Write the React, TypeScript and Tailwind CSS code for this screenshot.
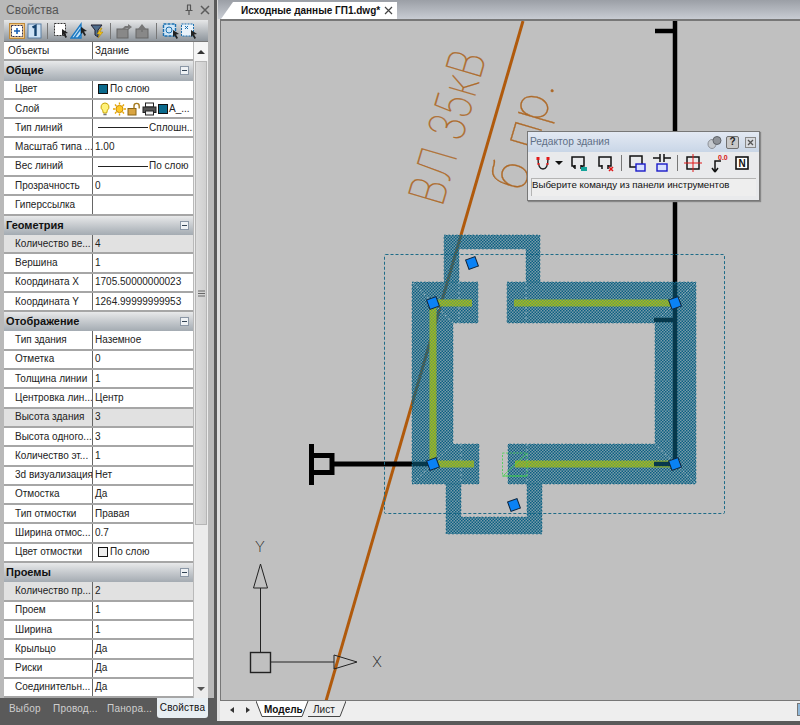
import React from "react";

type Row = {
  k?: string;
  v?: React.ReactNode;
  h?: string;
  sel?: boolean;
  top?: boolean;
};

const Line = ({ label }: { label: string }) => (
  <span className="flex items-center">
    <span className="w-[50px] h-px bg-[#222] ml-[3px] mr-[1px]" />
    <span>{label}</span>
  </span>
);

const Swatch = ({ c }: { c: string }) => (
  <span className="inline-block w-[10px] h-[10px] border border-[#111] mr-[2px] ml-[4px]" style={{ background: c }} />
);

const LayerIcons = () => (
  <span className="flex items-center ml-[3px]">
    <svg width="14" height="14" viewBox="0 0 14 14">
      <path d="M7 1a4 4 0 0 0-2.4 7.2L5.3 11h3.4l.7-2.8A4 4 0 0 0 7 1z" fill="#fff27a" stroke="#c9a400" />
      <path d="M5.4 12.5h3.2" stroke="#777" strokeWidth="1.5" />
    </svg>
    <svg width="15" height="14" viewBox="0 0 15 14">
      <circle cx="7.5" cy="7" r="3.6" fill="#ffc928" stroke="#c98a00" />
      <path d="M7.5 .5v2M7.5 11.5v2M1 7h2M12 7h2M3 2.5l1.4 1.4M10.6 10.1L12 11.5M3 11.5l1.4-1.4M10.6 3.9L12 2.5" stroke="#e6a500" strokeWidth="1.4" />
    </svg>
    <svg width="15" height="14" viewBox="0 0 15 14">
      <rect x="1" y="6.5" width="8" height="6.5" fill="#d9a441" stroke="#8a6414" />
      <path d="M7 6.5V4a2.6 2.6 0 0 1 5.2 0v2.5" fill="none" stroke="#a77c20" strokeWidth="1.4" />
    </svg>
    <svg width="15" height="14" viewBox="0 0 15 14">
      <rect x="3.5" y="1" width="8" height="4" fill="#fff" stroke="#222" />
      <rect x="1" y="5" width="13" height="5.5" fill="#555" stroke="#222" />
      <rect x="3.5" y="9" width="8" height="4" fill="#eee" stroke="#222" />
    </svg>
    <span className="inline-block w-[10px] h-[10px] border border-[#111] mr-[1px] ml-[1px] bg-[#0b6a8c]" />
    <span>A_...</span>
  </span>
);

const rows: Row[] = [
  { k: "Объекты", v: "Здание", top: true },
  { h: "Общие" },
  { k: "Цвет", v: <span className="flex items-center -ml-[1px]"><Swatch c="#0b6a8c" />По слою</span> },
  { k: "Слой", v: <LayerIcons /> },
  { k: "Тип линий", v: <Line label="Сплошн..." /> },
  { k: "Масштаб типа ...", v: "1.00" },
  { k: "Вес линий", v: <Line label="По слою" /> },
  { k: "Прозрачность", v: "0" },
  { k: "Гиперссылка", v: "" },
  { h: "Геометрия" },
  { k: "Количество ве...", v: "4", sel: true },
  { k: "Вершина", v: "1" },
  { k: "Координата X", v: "1705.50000000023" },
  { k: "Координата Y", v: "1264.99999999953" },
  { h: "Отображение" },
  { k: "Тип здания", v: "Наземное" },
  { k: "Отметка", v: "0" },
  { k: "Толщина линии", v: "1" },
  { k: "Центровка лин...", v: "Центр" },
  { k: "Высота здания", v: "3", sel: true },
  { k: "Высота одного...", v: "3" },
  { k: "Количество эт...", v: "1" },
  { k: "3d визуализация", v: "Нет" },
  { k: "Отмостка", v: "Да" },
  { k: "Тип отмостки", v: "Правая" },
  { k: "Ширина отмос...", v: "0.7" },
  { k: "Цвет отмостки", v: <span className="flex items-center -ml-[1px]"><Swatch c="#eeeeee" />По слою</span> },
  { h: "Проемы" },
  { k: "Количество пр...", v: "2", sel: true },
  { k: "Проем", v: "1" },
  { k: "Ширина", v: "1" },
  { k: "Крыльцо", v: "Да" },
  { k: "Риски", v: "Да" },
  { k: "Соединительн...", v: "Да" },
];

const Sep = () => <span className="w-px h-[16px] bg-[#777] mx-[5px] shrink-0" />;

const PanelToolbar = () => (
  <div className="h-[22px] flex items-center pl-[5px] bg-gradient-to-b from-[#e6e7e8] to-[#8f969d] border-b border-[#777]">
    <span className="w-[16px] h-[16px] flex items-center justify-center bg-[#f2c987] border border-[#c08a3a]">
      <svg width="12" height="12" viewBox="0 0 12 12">
        <rect x=".5" y=".5" width="11" height="11" fill="#fff" stroke="#335" strokeDasharray="2 1" />
        <path d="M6 3v6M3 6h6" stroke="#1a5fb4" strokeWidth="1.6" />
      </svg>
    </span>
    <svg className="ml-[2px]" width="15" height="16" viewBox="0 0 15 16">
      <rect x="1" y="1" width="13" height="14" fill="#cfe3f5" stroke="#5b7fa3" />
      <path d="M5.5 4.5L8.5 3V13" fill="none" stroke="#14426e" strokeWidth="2.4" />
    </svg>
    <Sep />
    <svg width="17" height="17" viewBox="0 0 17 17">
      <rect x="1.5" y="1.5" width="11" height="12" fill="#fff" stroke="#333" strokeDasharray="2 1" />
      <path d="M9 7l6 4-3 .5 2 3.5-1.5 1-2-3.5L9 14z" fill="#222" />
    </svg>
    <svg className="ml-[0px]" width="19" height="18" viewBox="0 0 19 18">
      <path d="M1 16L11 2v14zM4 16l8-11M8 16l4-5" fill="#bfe0f7" stroke="#1a78c2" strokeWidth="1.3" />
      <path d="M11 5l6 4-3 .5 2 3.5-1.5 1-2-3.5L11 12z" fill="#222" />
    </svg>
    <svg className="ml-[1px]" width="15" height="16" viewBox="0 0 15 16">
      <path d="M1 2h11L8 7v7L5 12V7z" fill="#4f6d8c" stroke="#223" />
      <path d="M11 5L7 11h3l-2 4 5-6h-3l2-4z" fill="#f5c518" stroke="#a67c00" strokeWidth=".5" />
    </svg>
    <Sep />
    <svg width="17" height="16" viewBox="0 0 17 16">
      <rect x="1" y="6" width="11" height="9" fill="#888" stroke="#666" />
      <path d="M6 6l3-3h3V1l4 3-4 3V5h-2L8 7z" fill="#777" />
    </svg>
    <svg className="ml-[1px]" width="17" height="16" viewBox="0 0 17 16">
      <rect x="2" y="6" width="12" height="9" fill="#888" stroke="#666" />
      <path d="M8 1l4 5H9v3H7V6H4z" fill="#777" />
    </svg>
    <Sep />
    <svg width="19" height="18" viewBox="0 0 19 18">
      <rect x="1.5" y="2" width="12" height="12" fill="#cfe6f7" stroke="#1a6fb0" strokeWidth="1.4" strokeDasharray="3 1" />
      <circle cx="7" cy="8" r="3" fill="none" stroke="#1a6fb0" />
      <path d="M11 8l6 4-3 .5 2 3.5-1.5 1-2-3.5L11 15z" fill="#222" />
    </svg>
    <svg className="ml-[-1px]" width="19" height="18" viewBox="0 0 19 18">
      <rect x="1.5" y="2" width="12" height="12" fill="#e8f2fa" stroke="#1a6fb0" strokeDasharray="2 1" />
      <path d="M5 4l3 3M8 4L5 7" stroke="#1a6fb0" />
      <path d="M11 8l6 4-3 .5 2 3.5-1.5 1-2-3.5L11 15z" fill="#222" />
    </svg>
  </div>
);

const Grid = () => (
  <div className="flex-1 min-w-0 text-[10px]">
    {rows.map((r, i) =>
      r.h ? (
        <div
          key={i}
          className="h-[19.3px] flex items-center justify-between pl-[2px] pr-[4px] bg-gradient-to-b from-[#e8e9ea] to-[#a4abb2] text-[#111] font-bold text-[11px]"
        >
          <span>{r.h}</span>
          <span className="w-[9px] h-[9px] border border-[#8b97a6] bg-[#eef1f4] flex items-center justify-center">
            <span className="w-[5px] h-px bg-[#345]" />
          </span>
        </div>
      ) : (
        <div
          key={i}
          className={`h-[19.3px] flex border-b-2 border-[#a6a6a6] ${r.sel ? "bg-[#e1e1e1]" : "bg-white"}`}
        >
          <div className={`w-[89px] shrink-0 flex items-center border-r border-[#666] whitespace-nowrap overflow-hidden ${r.top ? "pl-[4px]" : "pl-[11px]"}`}>
            {r.k}
          </div>
          <div className="flex-1 flex items-center pl-[2px] whitespace-nowrap overflow-hidden">{r.v}</div>
        </div>
      )
    )}
  </div>
);

const Scrollbar = () => (
  <div className="w-[14px] ml-[1px] flex flex-col bg-[#ececec]">
    <div className="h-[19px] flex items-center justify-center bg-[#f5f5f5]">
      <span className="w-0 h-0 border-x-[4px] border-x-transparent border-b-[4px] border-b-[#333]" />
    </div>
    <div className="h-[464px] mx-px bg-gradient-to-r from-[#dcdcdc] to-[#cfcfcf] border border-[#b5b5b5] flex items-center justify-center">
      <svg width="7" height="7" viewBox="0 0 7 7"><path d="M0 1h7M0 3.500h7M0 6h7" stroke="#666" /></svg>
    </div>
    <div className="flex-1" />
    <div className="h-[18px] flex items-center justify-center">
      <span className="w-0 h-0 border-x-[4px] border-x-transparent border-t-[4px] border-t-[#555]" />
    </div>
  </div>
);

const LeftPanel = () => (
  <div className="w-[214px] shrink-0 h-[725px] flex flex-col bg-[#5a5a5a]">
    <div className="h-[20px] flex items-center justify-between pl-[6px] pr-[3px] bg-[#b9b9b9] text-[#555]">
      <span>Свойства</span>
      <span className="flex items-center gap-[5px] text-[#555]">
        <svg width="10" height="12" viewBox="0 0 10 12"><path d="M3 1h4M3.500 1v5M6.500 1v5M1.500 6.500h7M5 7v4" stroke="#555" strokeWidth="1.2" fill="none" /></svg>
        <svg width="12" height="12" viewBox="0 0 12 12"><path d="M2 2l8 8M10 2l-8 8" stroke="#5c5c5c" strokeWidth="1.5" /></svg>
      </span>
    </div>
    <div className="h-[678px] flex flex-col bg-[#b9b9b9] px-[4px] pr-[6px]">
      <PanelToolbar />
      <div className="flex flex-1 min-h-0">
        <Grid />
        <Scrollbar />
      </div>
    </div>
    <div className="h-[22px] flex items-start pl-[9px] text-[#cfcfcf] text-[10px] tracking-[0.2px]">
      <span className="mt-[6px] w-[44px]">Выбор</span>
      <span className="mt-[6px] w-[54px]">Провод...</span>
      <span className="mt-[6px] w-[50px]">Панора...</span>
      <span className="h-[20px] w-[51px] flex items-center justify-center bg-[#e8eef2] text-[#111] rounded-b-[3px] whitespace-nowrap">Свойства</span>
    </div>
  </div>
);

const Grip = ({ x, y }: { x: number; y: number }) => (
  <rect x={x - 5} y={y - 5} width="10" height="10" fill="#0a82f5" stroke="#10253a" strokeWidth="1" transform={`rotate(-20 ${x} ${y})`} />
);

const Drawing = () => (
  <svg className="absolute inset-0" width="578" height="681" viewBox="222 20 578 681">
    <defs>
      <pattern id="hatch" width="3" height="3" patternUnits="userSpaceOnUse">
        <rect width="3" height="3" fill="#0e6486" fillOpacity="0.4" />
        <rect width="1.5" height="1.5" fill="#0a5f82" fillOpacity="1" />
        <rect x="1.5" y="1.5" width="1.5" height="1.5" fill="#0a5f82" fillOpacity="1" />
      </pattern>
      <pattern id="yel" width="3" height="3" patternUnits="userSpaceOnUse">
        <rect width="3" height="3" fill="#a4bb1e" />
        <rect width="1.5" height="1.5" fill="#6a9c50" />
        <rect x="1.500" y="1.500" width="1.5" height="1.5" fill="#6a9c50" />
      </pattern>
    </defs>

    <path d="M524 20L327 700" stroke="#b05a0c" strokeWidth="3" fill="none" />

    <text x="443" y="207" transform="rotate(-73.500 443 207)" fontFamily="Inter, 'DejaVu Sans', sans-serif" fontWeight="100" fontSize="50" textLength="158" lengthAdjust="spacingAndGlyphs" fill="#a9682a" stroke="#b46f2c" strokeWidth="0.4">ВЛ 35кВ</text>
    <text x="524" y="192" transform="rotate(-73.500 524 192)" fontFamily="Inter, 'DejaVu Sans', sans-serif" fontWeight="100" fontSize="50" textLength="113" lengthAdjust="spacingAndGlyphs" fill="#a9682a" stroke="#b46f2c" strokeWidth="0.4">б пр.</text>

    <path d="M676 20V284M656 30H676" stroke="#000" strokeWidth="4.5" fill="none" />
    <path d="M312.500 443V484" stroke="#000" strokeWidth="5" />
    <path d="M312 454.500H333V471.500H312" stroke="#000" strokeWidth="5" fill="none" />
    <path d="M333 463H414" stroke="#000" strokeWidth="5" />

    <rect x="385.500" y="253.500" width="340" height="259" rx="1" fill="none" stroke="#1f6c88" strokeDasharray="3 2" />

    <g fill="url(#hatch)" stroke="#1f6c88" strokeWidth="0.6" strokeDasharray="2 2">
      <path d="M413 281H479V322H454V443H480V483H413Z" />
      <path d="M508 281H697V483H509V443H656V322H508Z" />
      <path d="M445 234H541V281H527V248H460V281H445Z" />
      <path d="M447 483H462V516H528V483H543V533H447Z" />
    </g>

    <g stroke="#a8c4cf" strokeWidth="0.8" strokeDasharray="2 3" fill="none">
      <path d="M414 282L454 322M696 282L656 322M414 482L454 443M696 482L656 443" />
      <path d="M460 281V322M527 281V322M462 443V483M528 443V483" />
    </g>

    <g stroke="url(#yel)" strokeWidth="7" fill="none">
      <path d="M434 302H473" />
      <path d="M515 302H676" />
      <path d="M434 302V463H475" />
      <path d="M516 463H676" />
    </g>

    <path d="M676 284V463M655 319H676M655 463H676M414 463H434" stroke="#07394c" strokeWidth="4.5" fill="none" />

    <g fill="none" stroke="#3fd24a" strokeWidth="0.8">
      <rect x="503.500" y="452" width="24.500" height="23" strokeDasharray="2 1.500" />
      <path d="M505 474L527 453" />
      <path d="M503.500 475H528" />
    </g>

    <Grip x={434} y={302} />
    <Grip x={676} y={302} />
    <Grip x={434} y={463} />
    <Grip x={676} y={463} />
    <Grip x={473} y={262} />
    <Grip x={515} y={504} />

    <g stroke="#222" fill="none" strokeWidth="1">
      <rect x="251.500" y="651.500" width="20" height="20" strokeWidth="1.400" />
      <path d="M261.500 651V587M261.500 563L254.500 587H268.500ZM272 661H335M335 654L358 661L335 668Z" />
    </g>
    <text x="261" y="551" textAnchor="middle" fontFamily="Inter, 'DejaVu Sans', sans-serif" fontWeight="200" fontSize="15" fill="#222">Y</text>
    <text x="378" y="666" textAnchor="middle" fontFamily="Inter, 'DejaVu Sans', sans-serif" fontWeight="200" fontSize="15" fill="#222">X</text>
  </svg>
);

const PIcon = ({ children }: { children: React.ReactNode }) => (
  <svg width="20" height="20" viewBox="0 0 20 20" className="shrink-0">{children}</svg>
);

const Palette = () => (
  <div className="absolute left-[306px] top-[110px] w-[233px] h-[70px] bg-[#e9eaec] border border-[#777] shadow-[1px_1px_1px_#888] flex flex-col text-[9.7px]">
    <div className="h-[20px] flex items-center justify-between pl-[2px] pr-[3px] bg-gradient-to-b from-[#e3e9f3] to-[#c9d6e7] text-[#5f6f86] text-[10.2px] shrink-0">
      <span>Редактор здания</span>
      <span className="flex items-center gap-[4px]">
        <svg width="15" height="15" viewBox="0 0 15 15">
          <ellipse cx="5" cy="9" rx="4" ry="4.500" fill="#c5c9ce" stroke="#8d9198" />
          <ellipse cx="10" cy="5.500" rx="4" ry="4" fill="#8f9399" stroke="#60646a" />
        </svg>
        <span className="w-[13px] h-[13px] rounded-[2px] bg-[#c9c9c9] border border-[#6f6f6f] flex items-center justify-center text-[10px] font-bold text-[#222]">?</span>
        <span className="ml-[2px] w-[11px] h-[11px] bg-[#d8dbe0] border border-[#888] flex items-center justify-center">
          <svg width="7" height="7" viewBox="0 0 7 7"><path d="M1 1l5 5M6 1L1 6" stroke="#555" strokeWidth="1.300" /></svg>
        </span>
      </span>
    </div>
    <div className="h-[26px] flex items-center pl-[5px] pb-[4px] shrink-0">
      <PIcon>
        <path d="M5 5c0 9 2 11 5 11s5-2 5-11" fill="none" stroke="#222" strokeWidth="1.400" />
        <rect x="3.500" y="4" width="3" height="3" fill="#e01919" />
        <rect x="13.500" y="4" width="3" height="3" fill="#e01919" />
        <rect x="4.500" y="10" width="2" height="2" fill="#e01919" />
        <rect x="13.500" y="10" width="2" height="2" fill="#e01919" />
      </PIcon>
      <span className="ml-[2px] w-0 h-0 border-x-[4px] border-x-transparent border-t-[4px] border-t-[#111]" />
      <span className="w-[6px]" />
      <PIcon>
        <path d="M6 13H3V4h12v9h-3M6 12v4M12 12v4M6 14h-2M12 14h2" fill="none" stroke="#111" strokeWidth="1.500" />
        <rect x="12" y="14" width="6" height="4" fill="#14a39a" />
      </PIcon>
      <span className="w-[7px]" />
      <PIcon>
        <path d="M6 13H3V4h12v9h-3M6 12v4M12 12v4" fill="none" stroke="#111" strokeWidth="1.500" />
        <path d="M13 14l4 4M17 14l-4 4" stroke="#e01919" strokeWidth="1.500" />
      </PIcon>
      <Sep />
      <PIcon>
        <rect x="3" y="3" width="12" height="11" fill="none" stroke="#111" strokeWidth="1.500" />
        <rect x="9" y="11" width="9" height="7" fill="#d8e0ff" stroke="#1a1ac8" strokeWidth="1.400" />
      </PIcon>
      <span className="w-[5px]" />
      <PIcon>
        <path d="M1 5h7M12 5h7M8 1v8M12 1v8" stroke="#111" strokeWidth="1.500" />
        <rect x="5" y="11" width="10" height="7" fill="#d8e0ff" stroke="#1a1ac8" strokeWidth="1.400" />
      </PIcon>
      <Sep />
      <PIcon>
        <rect x="4" y="4" width="12" height="12" fill="none" stroke="#111" strokeWidth="1.500" />
        <path d="M1 10h18M10 1v18" stroke="#e01919" strokeWidth="1" />
      </PIcon>
      <span className="w-[6px]" />
      <PIcon>
        <path d="M6 19V8H12M6 19L3 15M6 19l3-4" fill="none" stroke="#111" strokeWidth="1.500" />
        <text x="9" y="7" fontSize="7" fontWeight="700" fill="#d81414" fontFamily="'Liberation Sans', sans-serif">0.0</text>
      </PIcon>
      <span className="w-[6px]" />
      <svg width="14" height="14" viewBox="0 0 14 14" className="shrink-0">
        <rect x="1" y="1" width="12" height="12" fill="#fff" stroke="#111" strokeWidth="1.600" />
        <text x="7" y="10.500" textAnchor="middle" fontSize="10" fontWeight="700" fill="#111" fontFamily="'Liberation Sans', sans-serif">N</text>
      </svg>
    </div>
    <div className="mx-[3px] h-[18px] bg-[#eeeeee] border-t border-l border-[#b4b4b4] text-[#111] leading-[12px] whitespace-nowrap overflow-hidden">
      Выберите команду из панели инструментов
    </div>
  </div>
);

const ModelTab = () => (
  <div className="relative w-[54px] h-[17px] shrink-0 flex items-center pl-[8px] font-bold text-[#111]">
    <svg className="absolute inset-0" width="54" height="17" viewBox="0 0 54 17">
      <path d="M0 0L6 15.500H46L52 0" fill="#fff" stroke="#444" />
    </svg>
    <span className="relative">Модель</span>
  </div>
);

const SheetTab = () => (
  <div className="relative w-[38px] h-[17px] shrink-0 -ml-[2px] flex items-center pl-[5px] text-[#222]">
    <svg className="absolute inset-0" width="38" height="17" viewBox="0 0 38 17">
      <path d="M0 15.500H32L38 0" fill="none" stroke="#444" />
    </svg>
    <span className="relative">Лист</span>
  </div>
);

const RightPanel = () => (
  <div className="flex-1 min-w-0 h-[725px] ml-[3px] flex flex-col bg-[#5a5a5a]">
    <div className="h-[19px] shrink-0 bg-gradient-to-b from-[#9b9fa6] to-[#c8ccd3] pl-[3px] flex items-end border-l border-[#d9d9d9]">
      <div className="w-[176px] h-[17px] bg-white flex items-center pl-[20px] justify-between pr-[4px] font-bold text-[10px] text-[#111] [clip-path:polygon(12px_0,100%_0,100%_100%,0_100%)]">
        <span className="whitespace-nowrap">Исходные данные ГП1.dwg*</span>
        <svg width="9" height="9" viewBox="0 0 9 9"><path d="M1 1l7 7M8 1L1 8" stroke="#444" strokeWidth="1.200" /></svg>
      </div>
    </div>
    <div className="h-[702px] flex flex-col bg-[#dedede] pl-[3px]">
      <div className="relative h-[681px] shrink-0 bg-[#c0c0c0] border-t-2 border-l border-[#777] overflow-hidden">
        <Drawing />
        <Palette />
      </div>
      <div className="flex-1 flex items-start bg-[#eeeeee] border-t border-[#777] pl-[4px] text-[10px]">
        <span className="w-[16px] h-[18px] flex items-center justify-center">
          <span className="w-0 h-0 border-y-[3px] border-y-transparent border-r-[4px] border-r-[#333]" />
        </span>
        <span className="w-[16px] h-[18px] flex items-center justify-center">
          <span className="w-0 h-0 border-y-[3px] border-y-transparent border-l-[4px] border-l-[#333]" />
        </span>
        <ModelTab />
        <SheetTab />
        <span className="ml-auto mt-[2px] w-[3px] h-[13px] bg-[#8fb7d8] border-l border-y border-[#777]" />
      </div>
    </div>
  </div>
);

export default function App() {
  return (
    <div className="w-[800px] h-[725px] flex overflow-hidden bg-[#5a5a5a] text-[12px] leading-none font-['Liberation_Sans',Arial,sans-serif] text-[#222]">
      <LeftPanel />
      <RightPanel />
    </div>
  );
}
